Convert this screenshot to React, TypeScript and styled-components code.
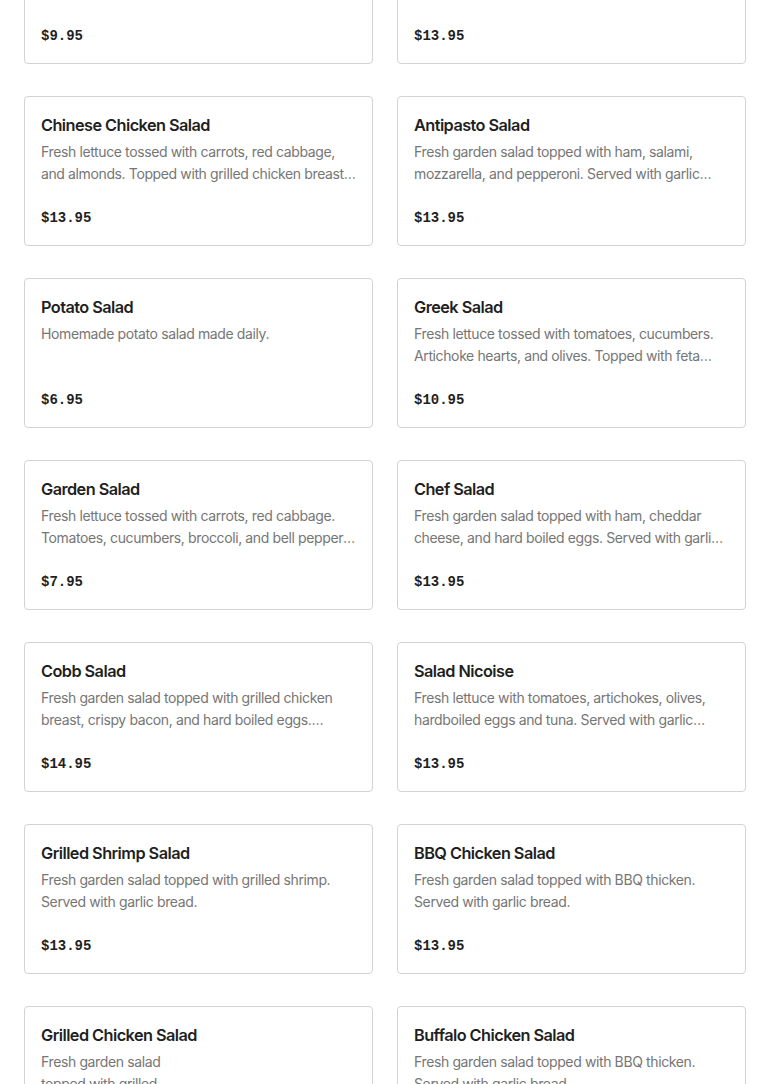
import React from "react";
import styled, { createGlobalStyle } from "styled-components";

const GlobalStyle = createGlobalStyle`
  html, body { margin: 0; padding: 0; background: #ffffff; }
  body { font-family: Inter, "Noto Sans", sans-serif; overflow: hidden; }
  * { box-sizing: border-box; }
`;

const Page = styled.div`
  padding: 0 24px;
  margin-top: -86px;
`;

const Grid = styled.div`
  display: grid;
  grid-template-columns: 1fr 1fr;
  column-gap: 24px;
  row-gap: 32px;
`;

const Card = styled.div`
  height: 150px;
  border: 1px solid #d3d3d3;
  border-radius: 4px;
  padding: 16px;
  display: flex;
  flex-direction: column;
  background: #fff;
`;

const Title = styled.div`
  font-family: Inter, "Noto Sans", sans-serif;
  font-size: 16.3px;
  font-weight: 600;
  letter-spacing: -0.55px;
  line-height: 24px;
  color: #1f1f1f;
  margin-bottom: 4px;
`;

const Desc = styled.div<{ $pre?: boolean }>`
  font-family: Inter, "Noto Sans", sans-serif;
  font-size: 14px;
  letter-spacing: -0.38px;
  line-height: 22px;
  color: #767676;
  display: -webkit-box;
  -webkit-line-clamp: 2;
  -webkit-box-orient: vertical;
  overflow: hidden;
  white-space: ${(p) => (p.$pre ? "pre-line" : "normal")};
`;

const Price = styled.div`
  margin-top: auto;
  margin-bottom: 1px;
  font-family: "Liberation Mono", "DejaVu Sans Mono", monospace;
  font-size: 14px;
  font-weight: 700;
  line-height: 20px;
  color: #1f1f1f;
`;

type Item = { name: string; desc: string; price: string; pre?: boolean };

const items: Item[] = [
  { name: "House Salad", desc: "", price: "$9.95" },
  { name: "Caesar Salad", desc: "", price: "$13.95" },
  {
    name: "Chinese Chicken Salad",
    desc: "Fresh lettuce tossed with carrots, red cabbage, and almonds. Topped with grilled chicken breast and crispy wontons.",
    price: "$13.95",
  },
  {
    name: "Antipasto Salad",
    desc: "Fresh garden salad topped with ham, salami, mozzarella, and pepperoni. Served with garlic bread.",
    price: "$13.95",
  },
  { name: "Potato Salad", desc: "Homemade potato salad made daily.", price: "$6.95" },
  {
    name: "Greek Salad",
    desc: "Fresh lettuce tossed with tomatoes, cucumbers. Artichoke hearts, and olives. Topped with feta cheese.",
    price: "$10.95",
  },
  {
    name: "Garden Salad",
    desc: "Fresh lettuce tossed with carrots, red cabbage. Tomatoes, cucumbers, broccoli, and bell peppers. Served with garlic bread.",
    price: "$7.95",
  },
  {
    name: "Chef Salad",
    desc: "Fresh garden salad topped with ham, cheddar cheese, and hard boiled eggs. Served with garlic bread.",
    price: "$13.95",
  },
  {
    name: "Cobb Salad",
    desc: "Fresh garden salad topped with grilled chicken breast, crispy bacon, and hard boiled eggs. Served with garlic bread.",
    price: "$14.95",
  },
  {
    name: "Salad Nicoise",
    desc: "Fresh lettuce with tomatoes, artichokes, olives, hardboiled eggs and tuna. Served with garlic bread.",
    price: "$13.95",
  },
  {
    name: "Grilled Shrimp Salad",
    desc: "Fresh garden salad topped with grilled shrimp. Served with garlic bread.",
    price: "$13.95",
  },
  {
    name: "BBQ Chicken Salad",
    desc: "Fresh garden salad topped with BBQ thicken. Served with garlic bread.",
    price: "$13.95",
  },
  {
    name: "Grilled Chicken Salad",
    desc: "Fresh garden salad\ntopped with grilled\nchicken breast.\nServed with garlic bread.",
    price: "$13.95",
    pre: true,
  },
  {
    name: "Buffalo Chicken Salad",
    desc: "Fresh garden salad topped with BBQ thicken. Served with garlic bread.",
    price: "$13.95",
  },
];

export default function App() {
  return (
    <>
      <GlobalStyle />
      <Page>
        <Grid>
          {items.map((it, i) => (
            <Card key={i}>
              <Title>{it.name}</Title>
              <Desc $pre={it.pre}>{it.desc}</Desc>
              <Price>{it.price}</Price>
            </Card>
          ))}
        </Grid>
      </Page>
    </>
  );
}
